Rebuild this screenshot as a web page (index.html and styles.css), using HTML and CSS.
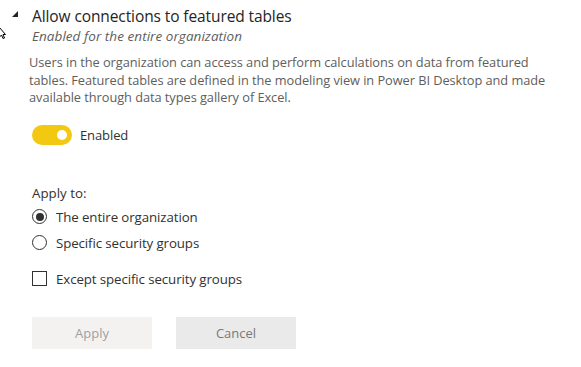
FILE: index.html
```html
<!DOCTYPE html>
<html>
<head>
<meta charset="utf-8">
<link rel="stylesheet" href="styles.css">
</head>
<body>
<div class="page">
  <div class="cursor">
    <svg width="7" height="12" viewBox="0 0 7 12"><path d="M0.5 0.5 L0.5 10 L2.5 8 L4 11.5 L5.5 11 L4 7.5 L6.5 7.5 Z" fill="#fff" stroke="#000" stroke-width="1"/></svg>
  </div>
  <div class="header">
    <svg class="caret" width="6" height="6" viewBox="0 0 6 6"><path d="M6 0 L6 6 L0 6 Z" fill="#252423"/></svg>
    <div class="titles">
      <div class="title">Allow connections to featured tables</div>
      <div class="subtitle">Enabled for the entire organization</div>
    </div>
  </div>
  <div class="content">
    <p class="desc">Users in the organization can access and perform calculations on data from featured<br>tables. Featured tables are defined in the modeling view in Power BI Desktop and made<br>available through data types gallery of Excel.</p>
    <div class="toggle-row">
      <span class="toggle"><span class="knob"></span></span>
      <span class="label">Enabled</span>
    </div>
    <div class="apply-label">Apply to:</div>
    <div class="option first"><span class="radio checked"></span><span class="label">The entire organization</span></div>
    <div class="option"><span class="radio"></span><span class="label">Specific security groups</span></div>
    <div class="option check-opt"><span class="checkbox"></span><span class="label">Except specific security groups</span></div>
    <div class="buttons">
      <button class="btn apply">Apply</button>
      <button class="btn cancel">Cancel</button>
    </div>
  </div>
</div>
</body>
</html>
```
FILE: styles.css
```css
html, body {
  margin: 0;
  padding: 0;
  background: #fff;
}
body {
  font-family: "Open Sans", "Noto Sans", sans-serif;
  color: #323130;
}
.page {
  position: relative;
  width: 581px;
  height: 367px;
  overflow: hidden;
}
.cursor {
  position: absolute;
  left: -1px;
  top: 27px;
  line-height: 0;
}
.header {
  display: flex;
  align-items: flex-start;
  padding-left: 12px;
  padding-top: 5px;
}
.caret {
  margin-top: 6px;
  margin-right: 14px;
}
.title {
  font-size: 15.5px;
  line-height: 22px;
  color: #252423;
  letter-spacing: -0.1px;
}
.subtitle {
  font-size: 13.5px;
  font-style: italic;
  line-height: 19px;
  color: #605e5c;
  letter-spacing: 0.05px;
}
.content {
  padding-left: 32px;
}
.desc {
  margin: 8px 0 0 -3px;
  white-space: nowrap;
  font-size: 12.8px;
  line-height: 17.5px;
  color: #605e5c;
  letter-spacing: -0.05px;
}
.toggle-row {
  display: flex;
  align-items: center;
  margin-top: 18px;
  height: 20px;
}
.toggle {
  position: relative;
  display: inline-block;
  width: 40px;
  height: 20px;
  border-radius: 10px;
  background: #f2c811;
}
.knob {
  position: absolute;
  right: 5px;
  top: 5px;
  width: 10px;
  height: 10px;
  border-radius: 50%;
  background: #fff;
}
.label {
  font-size: 13.3px;
  color: #323130;
  letter-spacing: -0.1px;
}
.toggle-row .label {
  margin-left: 8px;
  font-size: 13px;
}
.apply-label {
  margin-top: 39px;
  font-size: 13.3px;
  line-height: 18px;
  color: #323130;
  letter-spacing: 0;
}
.option {
  display: flex;
  align-items: center;
  height: 18px;
  margin-top: 8px;
}
.option.first {
  margin-top: 6px;
}
.check-opt {
  margin-top: 18px;
}
.radio {
  box-sizing: border-box;
  width: 15px;
  height: 15px;
  border: 1px solid #323130;
  border-radius: 50%;
  margin-right: 9px;
  position: relative;
}
.radio.checked::after {
  content: "";
  position: absolute;
  left: 2.5px;
  top: 2.5px;
  width: 8px;
  height: 8px;
  border-radius: 50%;
  background: #323130;
}
.checkbox {
  box-sizing: border-box;
  width: 15px;
  height: 15px;
  border: 1px solid #323130;
  margin-right: 9px;
}
.buttons {
  display: flex;
  gap: 24px;
  margin-top: 29px;
}
.btn {
  width: 120px;
  height: 32px;
  border: none;
  font-family: "Open Sans", "Noto Sans", sans-serif;
  font-size: 13px;
  padding: 0;
}
.apply {
  background: #f3f2f1;
  color: #a19f9d;
}
.cancel {
  background: #eaeaea;
  color: #7a7876;
}
```
